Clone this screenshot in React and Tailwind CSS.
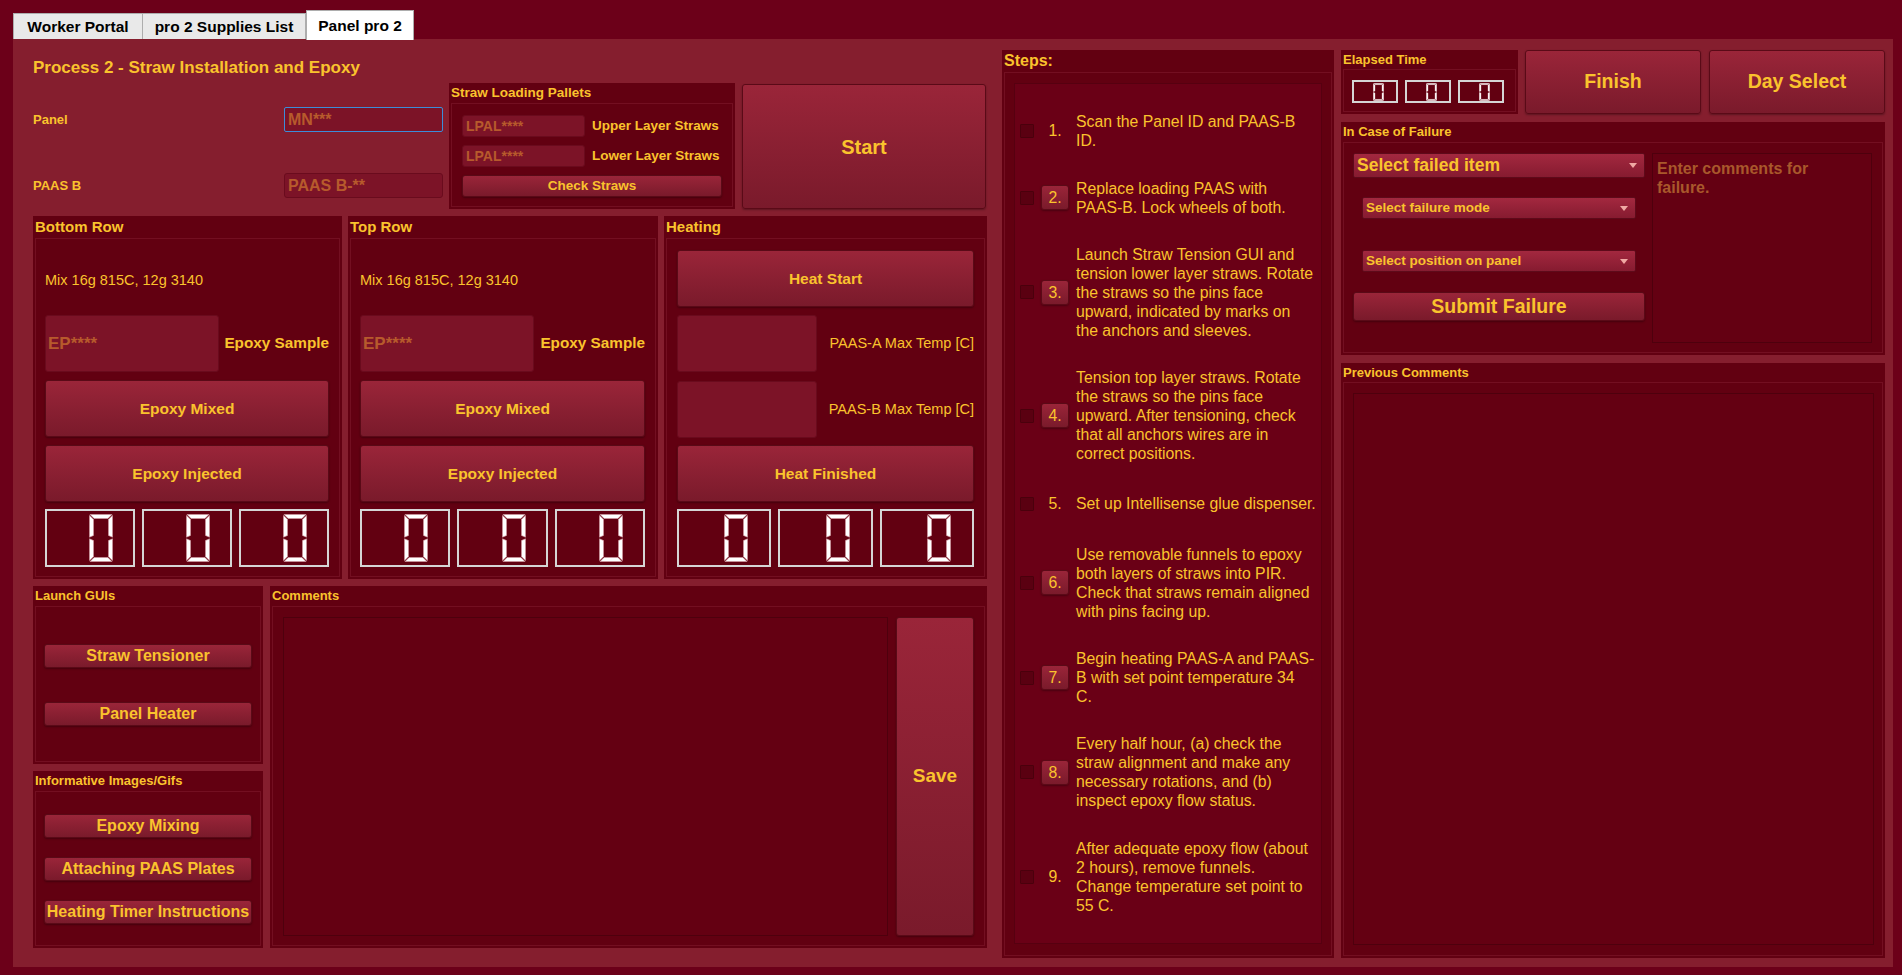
import React from "react";

const btn =
  "bg-linear-to-b from-[#9a2539] to-[#7a1a2b] border border-[#5a0a17] rounded-[3px] shadow-[0_1px_2px_rgba(0,0,0,0.3)] text-[#fac32d] font-bold flex items-center justify-center whitespace-nowrap";
const field =
  "bg-[#7c1327] border border-[#6a0b1d] rounded-[3px] text-[#b75a2c] font-bold flex items-center whitespace-nowrap";
const drop =
  "bg-linear-to-b from-[#a3283f] to-[#861b30] border border-[#5e0a1a] rounded-[2px] text-[#fac32d] font-bold flex items-center justify-between whitespace-nowrap";
const area = "bg-[#640012] border border-[#4e000d]";

const steps = [
  { n: "1.", btn: false, lines: ["Scan the Panel ID and PAAS-B", "ID."] },
  { n: "2.", btn: true, lines: ["Replace loading PAAS with", "PAAS-B. Lock wheels of both."] },
  {
    n: "3.",
    btn: true,
    lines: [
      "Launch Straw Tension GUI and",
      "tension lower layer straws. Rotate",
      "the straws so the pins face",
      "upward, indicated by marks on",
      "the anchors and sleeves.",
    ],
  },
  {
    n: "4.",
    btn: true,
    lines: [
      "Tension top layer straws. Rotate",
      "the straws so the pins face",
      "upward. After tensioning, check",
      "that all anchors wires are in",
      "correct positions.",
    ],
  },
  { n: "5.", btn: false, lines: ["Set up Intellisense glue dispenser."] },
  {
    n: "6.",
    btn: true,
    lines: [
      "Use removable funnels to epoxy",
      "both layers of straws into PIR.",
      "Check that straws remain aligned",
      "with pins facing up.",
    ],
  },
  {
    n: "7.",
    btn: true,
    lines: ["Begin heating PAAS-A and PAAS-", "B with set point temperature 34", "C."],
  },
  {
    n: "8.",
    btn: true,
    lines: [
      "Every half hour, (a) check the",
      "straw alignment and make any",
      "necessary rotations, and (b)",
      "inspect epoxy flow status.",
    ],
  },
  {
    n: "9.",
    btn: false,
    lines: [
      "After adequate epoxy flow (about",
      "2 hours), remove funnels.",
      "Change temperature set point to",
      "55 C.",
    ],
  },
];

// seven segment "0", no middle bar
function Digit({ small }) {
  return (
    <svg
      viewBox="0 0 24 48"
      preserveAspectRatio="none"
      className={small ? "w-[11px] h-[18px]" : "w-[24px] h-[48px]"}
    >
      <g fill="#ffffff" stroke="#d39aa3" strokeWidth="0.6">
        <polygon points="1,0.5 23,0.5 19,4.5 5,4.5" />
        <polygon points="5,43.5 19,43.5 23,47.5 1,47.5" />
        <polygon points="0.5,1.5 4.5,5.5 4.5,21.5 0.5,23.2" />
        <polygon points="0.5,24.8 4.5,26.5 4.5,42.5 0.5,46.5" />
        <polygon points="23.5,1.5 19.5,5.5 19.5,21.5 23.5,23.2" />
        <polygon points="23.5,24.8 19.5,26.5 19.5,42.5 23.5,46.5" />
      </g>
    </svg>
  );
}

function Lcd({ className = "", small = false }) {
  return (
    <div
      className={`bg-[#620011] border-2 border-[#d5d5d5] flex items-center justify-end ${className}`}
    >
      <Digit small={small} />
    </div>
  );
}

function Group({ title, className = "", titleClass = "", frameClass = "", children }) {
  return (
    <div className={`bg-[#620011] flex flex-col ${className}`}>
      <div className={`pl-[2px] font-bold whitespace-nowrap flex items-center shrink-0 ${titleClass}`}>
        {title}
      </div>
      <div className={`flex-1 min-h-0 mx-[2px] mb-[2px] border border-[#730f21] ${frameClass}`}>
        {children}
      </div>
    </div>
  );
}

function Arrow() {
  return (
    <svg viewBox="0 0 8 5" className="w-[8px] h-[5px] shrink-0">
      <polygon points="0,0 8,0 4,5" fill="#f0a9a4" />
    </svg>
  );
}

function EpoxyRow({ title, className }) {
  return (
    <Group
      title={title}
      className={className}
      titleClass="h-[22px] text-[15px]"
      frameClass="flex flex-col pl-[9px] pr-[10px]"
    >
      <div className="mt-[31px] h-[20px] text-[14.5px] leading-[20px] whitespace-nowrap">
        Mix 16g 815C, 12g 3140
      </div>
      <div className="mt-[25px] flex items-center h-[57px]">
        <div className={`${field} w-[174px] h-[57px] pl-[2px] text-[17px]`}>EP****</div>
        <div className="flex-1 text-right text-[15.3px] font-bold whitespace-nowrap">Epoxy Sample</div>
      </div>
      <div className={`${btn} mt-[8px] h-[57px] text-[15.5px]`}>Epoxy Mixed</div>
      <div className={`${btn} mt-[8px] h-[57px] text-[15.5px]`}>Epoxy Injected</div>
      <div className="mt-[7px] flex gap-[7px]">
        <Lcd className="flex-1 h-[58px] pr-[20px]" />
        <Lcd className="flex-1 h-[58px] pr-[20px]" />
        <Lcd className="flex-1 h-[58px] pr-[20px]" />
      </div>
    </Group>
  );
}

export default function App() {
  return (
    <div className="h-[975px] w-[1902px] overflow-hidden bg-[#6c0019] font-['Liberation_Sans',Arial,sans-serif] text-[#fac32d] flex flex-col pl-[13px] pr-[9px] pt-[10px] pb-[8px]">
      {/* tabs */}
      <div className="flex items-end h-[29px] shrink-0">
        <div className="h-[26px] w-[130px] bg-[#e9e9e9] border border-b-0 border-[#adadad] text-black font-bold text-[15.5px] flex items-center justify-center">
          Worker Portal
        </div>
        <div className="h-[26px] w-[163px] bg-[#e9e9e9] border border-b-0 border-l-0 border-[#adadad] text-black font-bold text-[15.5px] flex items-center justify-center">
          pro 2 Supplies List
        </div>
        <div className="h-[30px] w-[108px] mb-[-1px] relative z-10 bg-white border border-b-0 border-[#adadad] text-black font-bold text-[15.5px] flex items-center justify-center">
          Panel pro 2
        </div>
      </div>

      <div className="flex-1 min-h-0 bg-[#851e2e] flex pl-[20px] pt-[11px] pr-[8px] pb-[9px]">
        {/* left column */}
        <div className="w-[954px] flex flex-col gap-[7px] pb-[10px]">
          <div className="h-[159px] flex shrink-0">
            <div className="w-[410px] flex flex-col">
              <div className="mt-[8px] h-[20px] text-[17px] font-bold leading-[20px] whitespace-nowrap">
                Process 2 - Straw Installation and Epoxy
              </div>
              <div className="mt-[29px] h-[25px] flex items-center">
                <div className="w-[251px] text-[13px] font-bold">Panel</div>
                <div className="w-[159px] h-[25px] bg-[#7c1327] border border-[#3d8dd8] rounded-[2px] text-[#b75a2c] font-bold text-[16px] flex items-center pl-[3px]">
                  MN***
                </div>
              </div>
              <div className="mt-[41px] h-[25px] flex items-center">
                <div className="w-[251px] text-[13px] font-bold">PAAS B</div>
                <div className={`${field} w-[159px] h-[25px] text-[16px] pl-[3px]`}>PAAS B-**</div>
              </div>
            </div>

            <Group
              title="Straw Loading Pallets"
              className="ml-[6px] w-[286px] mt-[33px] h-[126px]"
              titleClass="h-[20px] text-[13.5px]"
              frameClass="flex flex-col pl-[10px] pr-[10px] pt-[11px]"
            >
              <div className="flex items-center h-[22px]">
                <div className={`${field} w-[123px] h-[22px] text-[14px] pl-[3px]`}>LPAL****</div>
                <div className="ml-[7px] text-[13.5px] font-bold whitespace-nowrap">Upper Layer Straws</div>
              </div>
              <div className="flex items-center h-[22px] mt-[8px]">
                <div className={`${field} w-[123px] h-[22px] text-[14px] pl-[3px]`}>LPAL****</div>
                <div className="ml-[7px] text-[13.5px] font-bold whitespace-nowrap">Lower Layer Straws</div>
              </div>
              <div className={`${btn} mt-[8px] h-[22px] w-[260px] text-[13.5px]`}>Check Straws</div>
            </Group>

            <div className={`${btn} ml-[7px] w-[244px] mt-[34px] h-[125px] text-[20px]`}>Start</div>
          </div>

          {/* middle groups */}
          <div className="h-[363px] flex gap-[6px] shrink-0">
            <EpoxyRow title="Bottom Row" className="w-[309px]" />
            <EpoxyRow title="Top Row" className="w-[310px]" />
            <Group
              title="Heating"
              className="flex-1"
              titleClass="h-[22px] text-[15px]"
              frameClass="flex flex-col pl-[10px] pr-[10px]"
            >
              <div className={`${btn} mt-[11px] h-[57px] text-[15.5px]`}>Heat Start</div>
              <div className="mt-[8px] flex items-center h-[57px]">
                <div className={`${field} w-[140px] h-[57px]`}></div>
                <div className="flex-1 text-right text-[14.5px] whitespace-nowrap">PAAS-A Max Temp [C]</div>
              </div>
              <div className="mt-[9px] flex items-center h-[57px]">
                <div className={`${field} w-[140px] h-[57px]`}></div>
                <div className="flex-1 text-right text-[14.5px] whitespace-nowrap">PAAS-B Max Temp [C]</div>
              </div>
              <div className={`${btn} mt-[7px] h-[57px] text-[15.5px]`}>Heat Finished</div>
              <div className="mt-[7px] flex gap-[7px]">
                <Lcd className="flex-1 h-[58px] pr-[21px]" />
                <Lcd className="flex-1 h-[58px] pr-[21px]" />
                <Lcd className="flex-1 h-[58px] pr-[21px]" />
              </div>
            </Group>
          </div>

          {/* bottom */}
          <div className="flex-1 min-h-0 flex gap-[7px]">
            <div className="w-[230px] flex flex-col gap-[7px]">
              <Group
                title="Launch GUIs"
                className="h-[178px]"
                titleClass="h-[20px] text-[13px]"
                frameClass="flex flex-col px-[8px]"
              >
                <div className={`${btn} mt-[37px] h-[24px] text-[16px]`}>Straw Tensioner</div>
                <div className={`${btn} mt-[34px] h-[24px] text-[16px]`}>Panel Heater</div>
              </Group>
              <Group
                title="Informative Images/Gifs"
                className="flex-1"
                titleClass="h-[20px] text-[13px]"
                frameClass="flex flex-col px-[8px]"
              >
                <div className={`${btn} mt-[22px] h-[24px] text-[16px]`}>Epoxy Mixing</div>
                <div className={`${btn} mt-[19px] h-[24px] text-[16px]`}>Attaching PAAS Plates</div>
                <div className={`${btn} mt-[19px] h-[24px] text-[16px]`}>Heating Timer Instructions</div>
              </Group>
            </div>
            <Group
              title="Comments"
              className="flex-1"
              titleClass="h-[20px] text-[13px]"
              frameClass="flex pl-[10px] pr-[10px] pt-[10px] pb-[9px] gap-[8px]"
            >
              <div className={`${area} flex-1`}></div>
              <div className={`${btn} w-[78px] text-[19px]`}>Save</div>
            </Group>
          </div>
        </div>

        {/* steps */}
        <Group
          title="Steps:"
          className="ml-[15px] w-[332px]"
          titleClass="h-[22px] text-[16px]"
          frameClass="flex flex-col pl-[9px] pr-[9px] pt-[10px] pb-[11px]"
        >
          <div className="flex-1 bg-[#6a0016] border border-[#560010] flex flex-col justify-evenly pl-[5px]">
            {steps.map((s) => (
              <div key={s.n} className="flex items-center">
                <div className="w-[14px] h-[14px] bg-[#5a0011] border border-[#4a000c] rounded-[1px] shrink-0"></div>
                {s.btn ? (
                  <div className={`${btn} ml-[7px] w-[28px] h-[25px] !font-normal text-[15.8px] shrink-0`}>
                    {s.n}
                  </div>
                ) : (
                  <div className="ml-[7px] w-[28px] h-[25px] text-[15.8px] flex items-center justify-center shrink-0">
                    {s.n}
                  </div>
                )}
                <div className="ml-[7px] text-[15.8px] leading-[19px] whitespace-nowrap">
                  {s.lines.map((l, i) => (
                    <div key={i}>{l}</div>
                  ))}
                </div>
              </div>
            ))}
          </div>
        </Group>

        {/* right column */}
        <div className="ml-[7px] w-[544px] flex flex-col gap-[8px]">
          <div className="h-[64px] flex shrink-0">
            <Group
              title="Elapsed Time"
              className="w-[177px]"
              titleClass="h-[19px] text-[13px]"
              frameClass="flex gap-[7px] pl-[8px] pt-[10px]"
            >
              <Lcd small className="w-[46px] h-[23px] pr-[12px]" />
              <Lcd small className="w-[46px] h-[23px] pr-[12px]" />
              <Lcd small className="w-[46px] h-[23px] pr-[12px]" />
            </Group>
            <div className={`${btn} ml-[7px] w-[176px] text-[19.5px]`}>Finish</div>
            <div className={`${btn} ml-[8px] w-[176px] text-[19.5px]`}>Day Select</div>
          </div>

          <Group
            title="In Case of Failure"
            className="h-[233px] shrink-0"
            titleClass="h-[20px] text-[13px]"
            frameClass="flex pl-[9px] pt-[10px]"
          >
            <div className="w-[292px] flex flex-col">
              <div className={`${drop} h-[25px] pl-[3px] pr-[7px] text-[17.5px]`}>
                <span>Select failed item</span>
                <Arrow />
              </div>
              <div className={`${drop} ml-[9px] w-[274px] mt-[19px] h-[22px] pl-[3px] pr-[7px] text-[13.5px]`}>
                <span>Select failure mode</span>
                <Arrow />
              </div>
              <div className={`${drop} ml-[9px] w-[274px] mt-[31px] h-[22px] pl-[3px] pr-[7px] text-[13.5px]`}>
                <span>Select position on panel</span>
                <Arrow />
              </div>
              <div className={`${btn} mt-[20px] h-[29px] text-[19.5px]`}>Submit Failure</div>
            </div>
            <div
              className={`${area} ml-[7px] w-[220px] h-[190px] pl-[4px] pt-[5px] text-[16px] leading-[19px] font-bold text-[#a9582b]`}
            >
              Enter comments for
              <br />
              failure.
            </div>
          </Group>

          <Group
            title="Previous Comments"
            className="flex-1 min-h-0"
            titleClass="h-[19px] text-[13px]"
            frameClass="flex pl-[9px] pr-[8px] pt-[10px] pb-[10px]"
          >
            <div className={`${area} flex-1`}></div>
          </Group>
        </div>
      </div>
    </div>
  );
}
